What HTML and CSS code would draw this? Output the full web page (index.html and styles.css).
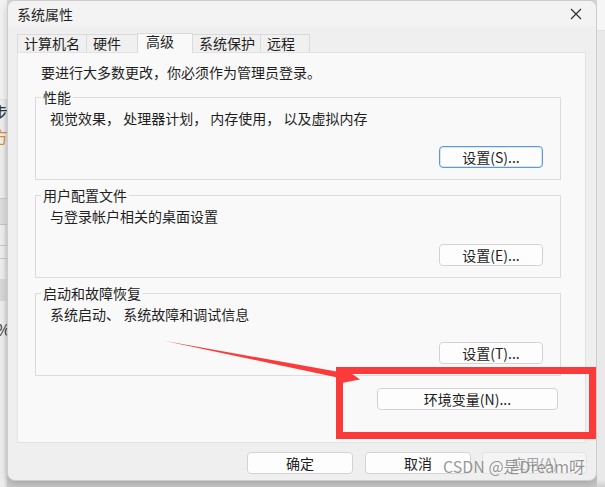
FILE: index.html
```html
<!DOCTYPE html>
<html lang="zh-CN">
<head>
<meta charset="utf-8">
<title>系统属性</title>
<link rel="stylesheet" href="styles.css">
</head>
<body>
<div class="screen">
  <div class="bgstrip">
    <div class="bg-top"></div>
    <div class="bg-char">步</div>
    <div class="bg-char orange">方</div>
    <div class="bg-line l1"></div>
    <div class="bg-band b1"></div>
    <div class="bg-line l2"></div>
    <div class="bg-line l3"></div>
    <div class="bg-band b2"></div>
    <div class="bg-char pct">%</div>
  </div>
  <div class="dialog">
    <div class="titlebar">
      <span class="title">系统属性</span>
      <span class="close">
        <svg width="12" height="12" viewBox="0 0 12 12"><path d="M1 1 L11 11 M11 1 L1 11" stroke="#2b2b2b" stroke-width="1.1" fill="none"/></svg>
      </span>
    </div>
    <div class="tabs">
      <div class="tab w1">计算机名</div>
      <div class="tab w2">硬件</div>
      <div class="tab w3 active">高级</div>
      <div class="tab w4">系统保护</div>
      <div class="tab w5">远程</div>
    </div>
    <div class="panel">
      <p class="note">要进行大多数更改，你必须作为管理员登录。</p>
      <fieldset class="group">
        <legend>性能</legend>
        <p class="desc">视觉效果， 处理器计划， 内存使用， 以及虚拟内存</p>
        <div class="btnrow"><button class="btn set focus">设置(S)...</button></div>
      </fieldset>
      <fieldset class="group">
        <legend>用户配置文件</legend>
        <p class="desc">与登录帐户相关的桌面设置</p>
        <div class="btnrow"><button class="btn set">设置(E)...</button></div>
      </fieldset>
      <fieldset class="group">
        <legend>启动和故障恢复</legend>
        <p class="desc">系统启动、 系统故障和调试信息</p>
        <div class="btnrow"><button class="btn set">设置(T)...</button></div>
      </fieldset>
      <div class="envrow"><button class="btn env">环境变量(N)...</button></div>
    </div>
    <div class="footer">
      <button class="btn foot">确定</button>
      <button class="btn foot">取消</button>
      <button class="btn foot apply" disabled>应用(A)</button>
    </div>
  </div>
  <div class="rightstrip"></div>
  <svg class="annot" width="605" height="487" viewBox="0 0 605 487">
    <polygon points="165,341 342.2,372.5 343.1,367.6 360,379.5 340.1,383.2 341,378.3" fill="#fb3a3a"/>
    <rect x="339.5" y="370.5" width="253" height="65" fill="none" stroke="#fb3a3a" stroke-width="7"/>
  </svg>
  <div class="watermark">CSDN @是Dream呀</div>
</div>
</body>
</html>
```

FILE: styles.css
```css
* { box-sizing: border-box; }
html, body { margin: 0; padding: 0; }
body {
  font-family: "Noto Sans CJK SC", "Noto Sans", sans-serif;
  font-size: 14px;
  color: #1e1e1e;
  background: #d2d2d2;
}
.screen {
  position: relative;
  width: 605px;
  height: 487px;
  overflow: hidden;
  display: flex;
  align-items: flex-start;
  background: linear-gradient(#d9d9d9, #cacaca);
}
.bgstrip {
  width: 7px;
  height: 487px;
  flex: none;
  background: #eeeeee;
  display: flex;
  flex-direction: column;
  overflow: hidden;
  box-shadow: inset -2px 0 2px rgba(0,0,0,0.08);
}
.bg-top { height: 100px; background: #f2f2f2; border-bottom: 1px solid #e2e2e2; }
.bg-char { font-size: 16px; line-height: 24px; margin-left: -8px; color: #333; }
.bg-char.orange { color: #d9902f; margin-bottom: 50px; }
.bg-line { height: 1px; background: #c9c9c9; }
.bg-band { background: #dddddd; }
.bg-band.b1 { height: 26px; border-bottom: 1px solid #c4c4c4; }
.bg-line.l2 { margin-top: 20px; }
.bg-line.l3 { margin-top: 12px; }
.bg-band.b2 { height: 22px; margin-top: 20px; background: #d8d8d8; }
.bg-char.pct { margin-top: 16px; margin-left: -4px; }

.dialog {
  width: 590px;
  height: 481px;
  flex: none;
  background: #efefef;
  border: 1px solid #cdcdcd;
  border-radius: 8px;
  box-shadow: 0 3px 8px rgba(0,0,0,0.18);
  overflow: hidden;
  display: flex;
  flex-direction: column;
}
.titlebar {
  height: 25px;
  flex: none;
  background: #f3f3f3;
  display: flex;
  align-items: center;
  justify-content: space-between;
  padding: 0 14px 0 9px;
}
.title { font-size: 14px; line-height: 22px; color: #1f1f1f; }
.close { display: flex; width: 12px; height: 12px; }

.tabs {
  height: 26px;
  flex: none;
  display: flex;
  align-items: flex-end;
  padding-left: 9px;
}
.tab {
  height: 18px;
  line-height: 16px;
  padding-left: 6px;
  background: #f0f0f0;
  border: 1px solid #dadada;
  border-bottom: none;
  margin-right: -1px;
  white-space: nowrap;
}
.tab.w1 { width: 70px; }
.tab.w2 { width: 52px; }
.tab.w3 { width: 56px; }
.tab.w4 { width: 69px; }
.tab.w5 { width: 50px; }
.tab.active {
  position: relative;
  z-index: 1;
  height: 20px;
  margin-bottom: -1px;
  padding-left: 8px;
  line-height: 15px;
  background: #f9f9f9;
}

.panel {
  height: 391px;
  flex: none;
  margin: 0 10px 0 9px;
  background: #f9f9f9;
  border: 1px solid #e2e2e2;
  display: flex;
  flex-direction: column;
}
.note {
  margin: 0;
  padding: 9px 0 0 23px;
  line-height: 20px;
}
.group {
  margin: 7px 24px 0 17px;
  padding: 0 17px 11px 5px;
  border: 1px solid #dcdcdc;
  min-inline-size: 0;
}
.group legend {
  padding: 0 2px;
  line-height: 16px;
  font-size: 14px;
}
.desc {
  margin: 4px 0 0 9px;
  line-height: 18px;
}
.btnrow {
  margin-top: 19px;
  display: flex;
  justify-content: flex-end;
}
.btn {
  font-family: "Noto Sans CJK SC", "Noto Sans", sans-serif;
  font-size: 14px;
  color: #1e1e1e;
  height: 22px;
  padding: 0;
  line-height: 20px;
  background: #fdfdfd;
  border: 1px solid #d3d3d3;
  border-radius: 4px;
}
.btn.set { width: 104px; }
.btn.focus { border-color: #5a9ad8; box-shadow: inset 0 0 0 1px #d5e6f7; }
.envrow {
  margin-top: 12px;
  display: flex;
  justify-content: flex-end;
  padding-right: 27px;
}
.btn.env { width: 181px; }
.footer {
  margin-top: 9px;
  display: flex;
  justify-content: flex-end;
  gap: 12px;
  padding-right: 9px;
}
.btn.foot { width: 106px; }
.btn.apply {
  width: 105px;
  margin-left: -1px;
  background: #f4f4f4;
  border-color: #e3e3e3;
  color: #a3a3a3;
}
.rightstrip {
  flex: 1;
  height: 487px;
  background: linear-gradient(#f6f6f6 0, #f6f6f6 30px, #d8d8d8 30px, #e9e9e9 31px, #e9e9e9 480px, #cfcfcf 100%);
}
.annot {
  position: absolute;
  left: 0;
  top: 0;
  pointer-events: none;
}
.watermark {
  position: absolute;
  left: 443px;
  top: 455px;
  font-size: 16px;
  line-height: 22px;
  color: rgba(110, 110, 110, 0.72);
  text-shadow: 0 0 2px rgba(255,255,255,0.8);
  white-space: nowrap;
}
```
